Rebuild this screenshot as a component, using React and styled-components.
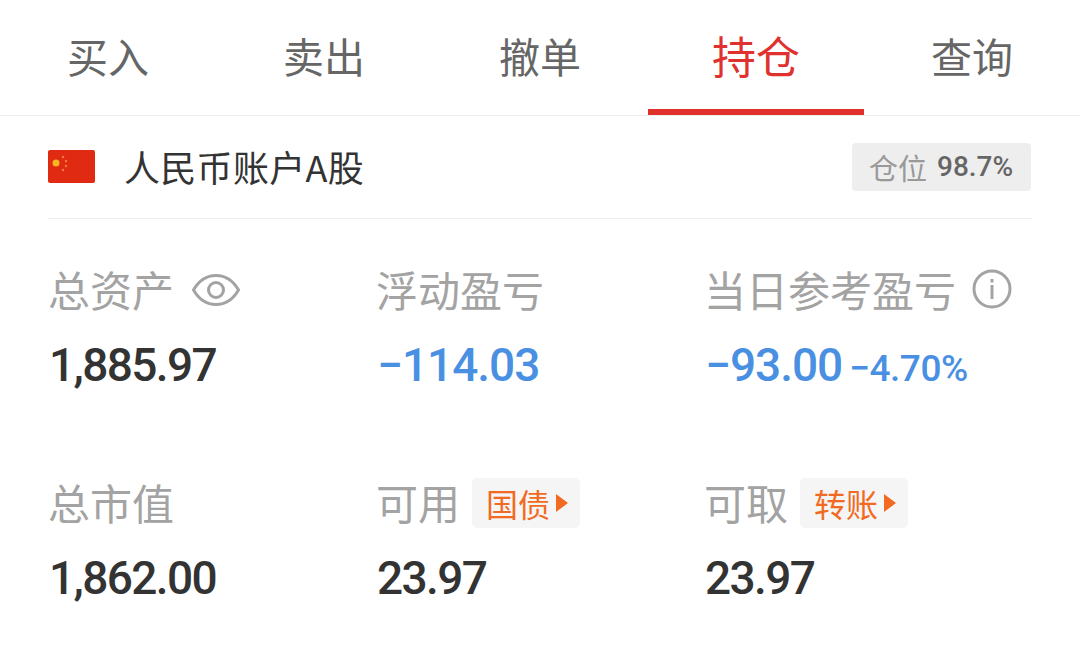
import React from "react"
import styled, { createGlobalStyle } from "styled-components"

const GlobalStyle = createGlobalStyle`
  html, body {
    margin: 0;
    padding: 0;
    background: #fff;
    font-family: "Noto Sans CJK SC", "Noto Sans", sans-serif;
  }
`

const tabs = ["买入", "卖出", "撤单", "持仓", "查询"]

const Flag = () => (
  <FlagIcon viewBox="0 0 47 33">
    <rect width="47" height="33" rx="2" fill="#e02a12" />
    <circle cx="8" cy="13" r="3.5" fill="#f5b91f" />
    <circle cx="15" cy="7" r="1.2" fill="#f0813a" />
    <circle cx="18" cy="11" r="1.2" fill="#f0813a" />
    <circle cx="18" cy="16" r="1.2" fill="#f0813a" />
    <circle cx="15" cy="20" r="1.2" fill="#f0813a" />
  </FlagIcon>
)

const Eye = () => (
  <EyeIcon width="48" height="36" viewBox="0 0 48 36">
    <path
      d="M1.5 18C7 8.5 14.5 3.5 24 3.5S41 8.5 46.5 18C41 27.5 33.500 32.500 24 32.500S7 27.500 1.500 18Z"
      fill="none"
      stroke="#a3a3a3"
      strokeWidth="3"
    />
    <circle cx="24" cy="18" r="7.500" fill="none" stroke="#a3a3a3" strokeWidth="3" />
  </EyeIcon>
)

const Info = () => (
  <InfoIcon width="40" height="40" viewBox="0 0 40 40">
    <circle cx="20" cy="20" r="18" fill="none" stroke="#a3a3a3" strokeWidth="3" />
    <rect x="18.500" y="10" width="3" height="3.500" fill="#a3a3a3" />
    <rect x="18.500" y="16" width="3" height="14" fill="#a3a3a3" />
  </InfoIcon>
)

const App = () => {
  return (
    <Page>
      <GlobalStyle />
      <TabBar>
        {tabs.map((t) => (
          <Tab key={t} $active={t === "持仓"}>
            {t}
          </Tab>
        ))}
      </TabBar>
      <Content>
        <AccountRow>
          <Flag />
          <AccountName>人民币账户A股</AccountName>
          <PositionBadge>
            仓位<PositionValue>98.7%</PositionValue>
          </PositionBadge>
        </AccountRow>
        <StatGrid>
          <Stat>
            <Label>
              总资产
              <Eye />
            </Label>
            <Value>1,885.97</Value>
          </Stat>
          <Stat>
            <Label>浮动盈亏</Label>
            <Value $blue>−114.03</Value>
          </Stat>
          <Stat>
            <Label>
              当日参考盈亏
              <Info />
            </Label>
            <Value $blue>
              −93.00<SmallValue>−4.70%</SmallValue>
            </Value>
          </Stat>
          <Stat>
            <Label>总市值</Label>
            <Value>1,862.00</Value>
          </Stat>
          <Stat>
            <Label>
              可用<ActionTag>国债<Arrow /></ActionTag>
            </Label>
            <Value>23.97</Value>
          </Stat>
          <Stat>
            <Label>
              可取<ActionTag>转账<Arrow /></ActionTag>
            </Label>
            <Value>23.97</Value>
          </Stat>
        </StatGrid>
      </Content>
    </Page>
  )
}

const Page = styled.div`
  width: 1080px;
  height: 652px;
  overflow: hidden;
  background: #fff;
`

const TabBar = styled.div`
  display: grid;
  grid-template-columns: repeat(5, 216px);
  height: 116px;
  box-sizing: border-box;
  border-bottom: 1px solid #eeeeee;
`

const Tab = styled.div`
  display: flex;
  align-items: center;
  justify-content: center;
  height: 115px;
  box-sizing: border-box;
  font-size: ${(p) => (p.$active ? "44px" : "41px")};
  color: ${(p) => (p.$active ? "#e0312f" : "#666666")};
  border-bottom: 6px solid ${(p) => (p.$active ? "#e0312f" : "transparent")};
`

const Content = styled.div`
  padding: 0 48px;
`

const AccountRow = styled.div`
  display: flex;
  align-items: center;
  height: 102px;
  border-bottom: 1px solid #eeeeee;
`

const FlagIcon = styled.svg`
  width: 47px;
  height: 33px;
  margin-right: 29px;
  margin-bottom: 2px;
`

const AccountName = styled.div`
  flex: 1;
  margin-bottom: 2px;
  font-size: 36px;
  letter-spacing: 0.3px;
  line-height: 44px;
  color: #333333;
`

const PositionBadge = styled.div`
  display: flex;
  align-items: center;
  gap: 10px;
  width: 179px;
  height: 48px;
  box-sizing: border-box;
  padding-left: 17px;
  margin: 0 1px 1px -1px;
  border-radius: 4px;
  background: #eeeeee;
  font-size: 29px;
  color: #999999;
`

const PositionValue = styled.span`
  font-family: "Roboto", sans-serif;
  font-size: 28px;
  font-weight: 500;
  color: #666666;
`

const StatGrid = styled.div`
  display: grid;
  grid-template-columns: 328px 328px 1fr;
  grid-auto-rows: 213px;
  padding-top: 40px;
`

const Stat = styled.div`
  display: flex;
  flex-direction: column;
`

const Label = styled.div`
  display: flex;
  align-items: center;
  height: 58px;
  font-size: 42px;
  color: #a3a3a3;
`

const EyeIcon = styled.svg`
  margin: 4px 0 0 18px;
`

const InfoIcon = styled.svg`
  margin: 2px 0 0 16px;
`

const Value = styled.div`
  display: flex;
  align-items: baseline;
  margin-top: 20px;
  padding-left: 1px;
  font-family: "Roboto", sans-serif;
  font-size: 46px;
  font-weight: 500;
  letter-spacing: ${(p) => (p.$blue ? "-1px" : "-1.6px")};
  line-height: 56px;
  color: ${(p) => (p.$blue ? "#4a90e2" : "#333333")};
`

const SmallValue = styled.span`
  margin-left: 7px;
  font-size: 37px;
  letter-spacing: -0.5px;
`

const ActionTag = styled.span`
  display: inline-flex;
  align-items: center;
  height: 50px;
  margin: 4px 0 0 12px;
  padding: 0 12px 0 14px;
  border-radius: 5px;
  background: #f5f5f5;
  font-size: 32px;
  color: #f26a21;
`

const Arrow = styled.i`
  width: 0;
  height: 0;
  margin-left: 6px;
  border-left: 12px solid #f26a21;
  border-top: 9px solid transparent;
  border-bottom: 9px solid transparent;
`

export default App
